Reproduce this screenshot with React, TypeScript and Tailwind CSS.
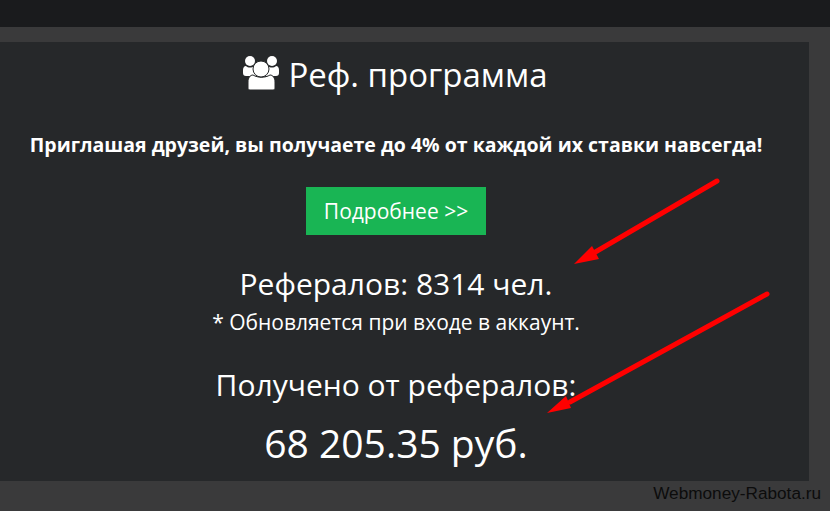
export default function App() {
  return (
    <div className="relative h-[511px] w-[830px] overflow-hidden bg-[#3a3a3b] font-['Open_Sans',sans-serif] text-white">
      <div className="h-[27px] bg-[#1a1b1d]" />
      <main className="mt-[15px] flex h-[439px] w-[809px] flex-col items-center bg-[#26282a] pr-[17px] text-center">
        <h1 className="mt-[9px] flex h-[48px] items-center gap-[9px] pr-[1px] text-[33px] leading-[48px]">
          <svg width="36" height="35" viewBox="0 0 36 35" fill="#fff" className="mb-[3px]">
            <circle cx="7" cy="5" r="5" />
            <circle cx="29" cy="5" r="5" />
            <path d="M0 14c0-2 1-4 3-4 2 2 6 2 8 0h3v10H3c-2 0-3-1-3-3z" />
            <path d="M36 14c0-2-1-4-3-4-2 2-6 2-8 0h-3v10h11c2 0 3-1 3-3z" />
            <path
              d="M7 34c-1.500 0-2-1-2-2v-6c0-4 2-7 5-7 5 3 12 3 17 0 3 0 5 3 5 7v6c0 1-.5 2-2 2z"
              stroke="#26282a"
              strokeWidth="1"
            />
            <circle cx="18" cy="13" r="8" stroke="#26282a" strokeWidth="1" />
          </svg>
          Реф. программа
        </h1>
        <p className="mt-[32px] whitespace-nowrap text-[19.500px] font-bold leading-[28px]">
          Приглашая друзей, вы получаете до 4% от каждой их ставки навсегда!
        </p>
        <a className="mt-[28px] flex h-[48px] w-[180px] items-center justify-center bg-[#19b554] pt-[2px] text-[21px]">
          Подробнее &gt;&gt;
        </a>
        <p className="mt-[29px] text-[30px] leading-[40px]">Рефералов: 8314 чел.</p>
        <p className="mt-[3px] text-[21px] leading-[30px]">* Обновляется при входе в аккаунт.</p>
        <p className="mt-[28px] text-[30px] leading-[40px]">Получено от рефералов:</p>
        <p className="mt-[13px] text-[39px] leading-[50px]">68 205.35 руб.</p>
      </main>
      <div className="absolute right-[9px] top-[483px] font-['Liberation_Sans',sans-serif] text-[17.200px] leading-[20px] text-[#0c0c0c]">
        Webmoney-Rabota.ru
      </div>
      <svg className="absolute left-0 top-0" width="830" height="511" fill="#ff0000" stroke="none">
        <line x1="717" y1="181" x2="592" y2="254" stroke="#ff0000" strokeWidth="5" strokeLinecap="round" />
        <polygon points="574,264 592,246 599,259" />
        <line x1="767" y1="294" x2="570" y2="402" stroke="#ff0000" strokeWidth="5" strokeLinecap="round" />
        <polygon points="547,413 566,396 571,408" />
      </svg>
    </div>
  );
}
